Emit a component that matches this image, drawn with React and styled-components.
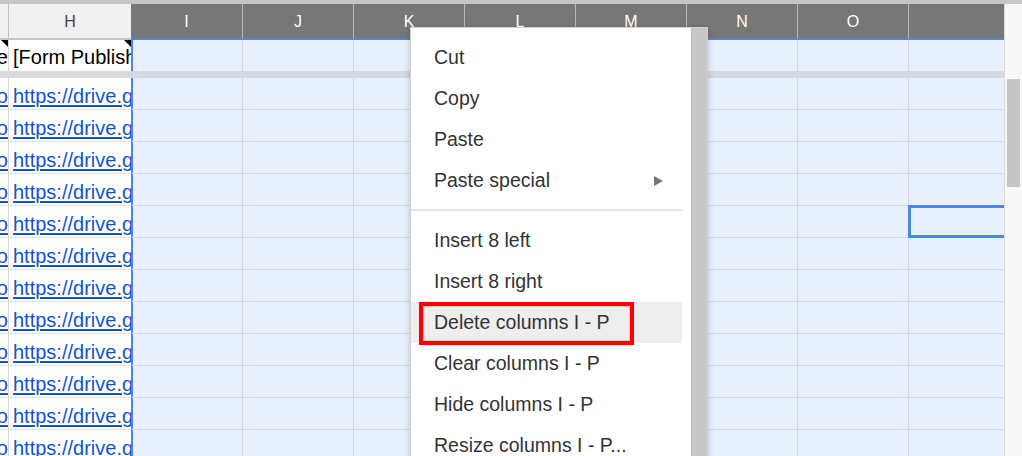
import React from "react";
import styled, { createGlobalStyle, css } from "styled-components";

const GlobalStyle = createGlobalStyle`
  html, body {
    margin: 0;
    padding: 0;
    background: #fff;
    overflow: hidden;
  }
  body {
    font-family: "Liberation Sans", Arial, sans-serif;
  }
`;

const BLUE = "#4a86e8";
const SEL_BG = "#e8f0fe";
const SEL_LINE = "#d3d9e4";
const LINE = "#e2e2e2";

const COLS = [
  { name: "", kind: "g" },
  { name: "H", kind: "h" },
  { name: "I", kind: "i" },
  { name: "J", kind: "sel" },
  { name: "K", kind: "sel" },
  { name: "L", kind: "sel" },
  { name: "M", kind: "sel" },
  { name: "N", kind: "sel" },
  { name: "O", kind: "sel" },
  { name: "", kind: "sel" },
];

const BODY_ROWS = 12;
const ACTIVE = { row: 4, col: 9 };

const isSel = (kind) => kind === "i" || kind === "sel";

const Page = styled.div`
  position: relative;
  width: 1022px;
  height: 456px;
  overflow: hidden;
  display: flex;
  flex-direction: column;
`;

const TopStrip = styled.div`
  flex: none;
  height: 4px;
  background: #c6c6c6;
`;

const Main = styled.div`
  flex: 1;
  display: flex;
  min-height: 0;
`;

const Grid = styled.div`
  width: 1004px;
  flex: none;
  overflow: hidden;
  display: grid;
  grid-template-columns: 9px 122px repeat(7, 111px) 96px;
  grid-template-rows: 36px 31px 7px repeat(${BODY_ROWS}, 32px);
`;

const HeadCell = styled.div`
  display: flex;
  align-items: center;
  justify-content: center;
  padding-top: 2px;
  font-size: 16px;
  background: ${(p) => (isSel(p.$kind) ? "#777777" : "#f1f1f1")};
  color: ${(p) => (isSel(p.$kind) ? "#ffffff" : "#444444")};
  border-bottom: 2px solid ${(p) => (isSel(p.$kind) ? BLUE : "#c4c4c4")};
  ${(p) => p.$kind === "g" && css`border-right: 1px solid #c0c0c0;`}
  ${(p) => p.$kind === "sel" && css`border-left: 1px solid #b8b8b8;`}
`;

const Cell = styled.div`
  position: relative;
  display: flex;
  align-items: flex-end;
  min-width: 0;
  padding-bottom: ${(p) => (p.$top ? "2px" : "1px")};
  font-size: 20px;
  white-space: nowrap;
  background: ${(p) => (isSel(p.$kind) ? SEL_BG : "#ffffff")};
  ${(p) =>
    !p.$top &&
    css`border-bottom: 1px solid ${isSel(p.$kind) ? SEL_LINE : LINE};`}
  ${(p) =>
    p.$kind === "g" &&
    css`
      justify-content: flex-end;
      overflow: hidden;
      border-right: 1px solid #d8d8d8;
    `}
  ${(p) =>
    p.$kind === "h" &&
    css`
      padding-left: 4px;
      overflow: hidden;
    `}
  ${(p) => p.$kind === "i" && css`border-left: 2px solid ${BLUE};`}
  ${(p) => p.$kind === "sel" && css`border-left: 1px solid ${SEL_LINE};`}
  ${(p) =>
    p.$note &&
    css`
      &::before {
        content: "";
        position: absolute;
        top: 0;
        right: 0;
        border-top: 7px solid #000;
        border-left: 7px solid transparent;
        z-index: 1;
      }
    `}
  ${(p) =>
    p.$active &&
    css`
      &::after {
        content: "";
        position: absolute;
        top: -1px;
        left: -1px;
        right: -4px;
        bottom: -1px;
        border: 3px solid ${BLUE};
      }
    `}
`;

const Freeze = styled.div`
  background: ${(p) => (isSel(p.$kind) ? "#d4d9e2" : "#d8d9dc")};
`;

const CellText = styled.span`
  flex: none;
  color: #000;
`;

const Link = styled.span`
  flex: none;
  color: #1155cc;
  text-decoration: underline;
  text-decoration-thickness: 1.5px;
  text-underline-offset: 2px;
`;

const VScroll = styled.div`
  flex: 1;
  background: #f8f8f8;
  border-left: 1px solid #dadada;
`;

const Thumb = styled.div`
  margin: 75px 0 0 2px;
  width: 13px;
  height: 108px;
  background: #c6c6c6;
`;

const Menu = styled.div`
  position: absolute;
  left: 410px;
  top: 27px;
  width: 296px;
  height: 460px;
  display: flex;
  background: #fff;
  border: 1px solid rgba(0, 0, 0, 0.18);
  box-shadow: 0 2px 6px rgba(0, 0, 0, 0.22);
  z-index: 5;
`;

const MenuList = styled.div`
  width: 271px;
  padding-top: 9px;
  display: flex;
  flex-direction: column;
`;

const MenuScroll = styled.div`
  width: 15px;
  margin-left: 9px;
  background: #c8c8c8;
  border-left: 1px solid #bdbdbd;
`;

const Item = styled.div`
  position: relative;
  flex: none;
  height: 41px;
  display: flex;
  align-items: center;
  justify-content: space-between;
  padding: 0 19px 0 23px;
  font-size: 19.5px;
  color: #333;
  background: ${(p) => (p.$hover ? "#eeeeee" : "transparent")};
`;

const SubArrow = styled.span`
  width: 0;
  height: 0;
  margin-top: 1px;
  border-left: 9px solid #777;
  border-top: 5.5px solid transparent;
  border-bottom: 5.5px solid transparent;
`;

const Separator = styled.div`
  flex: none;
  height: 2px;
  margin: 8px 0 9px;
  background: #e6e6e6;
`;

const Mark = styled.div`
  position: absolute;
  left: 8px;
  top: 0;
  width: 215px;
  height: 43px;
  box-sizing: border-box;
  border: 4px solid #ff0000;
  box-shadow: inset 0 0 0 1px #e3c4c4;
`;

const MENU = [
  { label: "Cut" },
  { label: "Copy" },
  { label: "Paste" },
  { label: "Paste special", sub: true },
  { sep: true },
  { label: "Insert 8 left" },
  { label: "Insert 8 right" },
  { label: "Delete columns I - P", hover: true, mark: true },
  { label: "Clear columns I - P" },
  { label: "Hide columns I - P" },
  { label: "Resize columns I - P..." },
];

function bodyContent(kind) {
  if (kind === "g") return <Link>https://docs.google.co</Link>;
  if (kind === "h") return <Link>https://drive.google.com/open?id=1</Link>;
  return null;
}

export default function App() {
  return (
    <>
      <GlobalStyle />
      <Page>
        <TopStrip />
        <Main>
          <Grid>
            {COLS.map((c, i) => (
              <HeadCell key={`h${i}`} $kind={c.kind}>
                {c.name}
              </HeadCell>
            ))}
            {COLS.map((c, i) => (
              <Cell key={`r1${i}`} $kind={c.kind} $top $note={c.kind === "g" || c.kind === "h"}>
                {c.kind === "g" && <CellText>Name</CellText>}
                {c.kind === "h" && <CellText>[Form Publisher] Link</CellText>}
              </Cell>
            ))}
            {COLS.map((c, i) => (
              <Freeze key={`f${i}`} $kind={c.kind} />
            ))}
            {Array.from({ length: BODY_ROWS }).map((_, r) =>
              COLS.map((c, i) => (
                <Cell
                  key={`b${r}-${i}`}
                  $kind={c.kind}
                  $active={r === ACTIVE.row && i === ACTIVE.col}
                >
                  {bodyContent(c.kind)}
                </Cell>
              ))
            )}
          </Grid>
          <VScroll>
            <Thumb />
          </VScroll>
        </Main>

        <Menu>
          <MenuList>
            {MENU.map((m, i) =>
              m.sep ? (
                <Separator key={i} />
              ) : (
                <Item key={i} $hover={m.hover}>
                  <span>{m.label}</span>
                  {m.sub && <SubArrow />}
                  {m.mark && <Mark />}
                </Item>
              )
            )}
          </MenuList>
          <MenuScroll />
        </Menu>
      </Page>
    </>
  );
}
